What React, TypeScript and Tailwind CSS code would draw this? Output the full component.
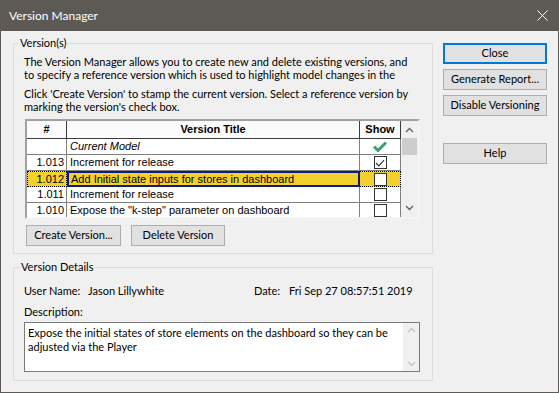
import React from 'react'

const ui = "font-['Lato','Noto_Sans',sans-serif] text-[11px] text-black"
const cell = "font-['Liberation_Sans',Arial,sans-serif] text-[11px] text-black"

const rows = [
  { num: '', title: 'Current Model', italic: true, show: 'current' as const },
  { num: '1.013', title: 'Increment for release', show: true },
  { num: '1.012', title: 'Add Initial state inputs for stores in dashboard', show: false, selected: true },
  { num: '1.011', title: 'Increment for release', show: false },
  { num: '1.010', title: 'Expose the "k-step" parameter on dashboard', show: false },
]

const Chevron = ({ up, color }: { up?: boolean; color: string }) => (
  <svg width="9" height="6" viewBox="0 0 9 6">
    <polyline
      points={up ? '1,5 4.5,1.5 8,5' : '1,1 4.5,4.5 8,1'}
      fill="none"
      stroke={color}
      strokeWidth="1.3"
    />
  </svg>
)

const GreenCheck = () => (
  <svg width="14" height="11" viewBox="0 0 14 11">
    <path d="M1 5.5 L5 9.5 L13 1.5" fill="none" stroke="#3a9f70" strokeWidth="3" />
  </svg>
)

const Box = ({ checked }: { checked?: boolean }) => (
  <div className="w-[13px] h-[13px] border border-[#333333] bg-white flex items-center justify-center">
    {checked && (
      <svg width="10" height="8" viewBox="0 0 10 8">
        <path d="M1 4 L3.8 6.8 L9 1.2" fill="none" stroke="#333333" strokeWidth="1.2" />
      </svg>
    )}
  </div>
)

const Btn = ({ children, w, focused }: { children: React.ReactNode; w: string; focused?: boolean }) => (
  <div
    className={`${w} h-[21px] bg-[#e1e1e1] flex items-center justify-center whitespace-nowrap ${
      focused ? 'border-2 border-[#0078d7]' : 'border border-[#adadad]'
    }`}
  >
    {children}
  </div>
)

const VersionTable = () => (
  <div className="ml-[1px] mt-[6px] w-[395px] h-[100px] border-2 border-t-[#a0a0a0] border-l-[#a0a0a0] border-r-[#f4f4f4] border-b-[#f4f4f4] flex bg-white overflow-hidden">
    <div className="w-[374px] flex flex-col">
      <div className="flex h-[18px] shrink-0 bg-[#fbfbfb]">
        <div className={`${cell} font-bold w-[40px] border-r border-b border-[#3c3c3c] flex items-center justify-center`}>#</div>
        <div className={`${cell} font-bold w-[293px] border-r border-b border-[#3c3c3c] flex items-center justify-center`}>Version Title</div>
        <div className={`${cell} font-bold w-[41px] border-r border-b border-[#3c3c3c] flex items-center justify-center`}>Show</div>
      </div>
      {rows.map((r) => (
        <div key={r.num + r.title} className={`flex h-[16px] shrink-0 ${r.selected ? 'bg-[#f2d02d]' : ''}`}>
          <div
            className={`${cell} w-[40px] flex items-center justify-end pr-[2px] leading-[15px] ${
              r.selected ? 'border border-dotted border-black' : 'border-r border-b border-[#808080]'
            }`}
          >
            {r.num}
          </div>
          <div
            className={`${cell} w-[293px] flex items-center leading-[15px] whitespace-nowrap overflow-hidden ${
              r.selected ? 'border-2 border-[#0f1a86] pl-[2px]' : 'border-r border-b border-[#808080] pl-[3px]'
            } ${r.italic ? 'italic' : ''}`}
          >
            {r.title}
          </div>
          <div
            className={`w-[41px] flex items-center justify-center ${
              r.selected ? 'border-y border-dotted border-black border-r' : 'border-r border-b border-[#808080]'
            }`}
          >
            {r.show === 'current' ? <GreenCheck /> : <Box checked={r.show === true} />}
          </div>
        </div>
      ))}
    </div>
    <div className="w-[17px] bg-[#f0f0f0] flex flex-col items-center">
      <div className="h-[17px] flex items-center justify-center shrink-0">
        <Chevron up color="#606060" />
      </div>
      <div className="w-[15px] h-[17px] bg-[#cdcdcd] shrink-0" />
      <div className="flex-1" />
      <div className="h-[18px] flex items-center justify-center shrink-0">
        <Chevron color="#606060" />
      </div>
    </div>
  </div>
)

export default function App() {
  return (
    <div className={`${ui} w-[559px] h-[393px] bg-[#5d5955] px-[1px] pb-[1px] flex flex-col`}>
      <div className="h-[31px] shrink-0 flex items-center justify-between pl-[8px] pr-[10px]">
        <span className="text-white text-[12px]">Version Manager</span>
        <svg width="11" height="11" viewBox="0 0 11 11">
          <path d="M0.5 0.5 L10.5 10.5 M10.5 0.5 L0.5 10.5" stroke="white" strokeWidth="1" />
        </svg>
      </div>
      <div className="flex-1 bg-[#f0f0f0] flex">
        <div className="w-[432px] pl-[12px] flex flex-col">
          <fieldset className="mt-[5px] w-[420px] border border-[#dcdcdc] px-[10px] pb-[7px]">
            <legend className="ml-[-5px] px-[1px] leading-[14px]">Version(s)</legend>
            <div className="mt-[5px] leading-[13px] whitespace-nowrap">
              <div>The Version Manager allows you to create new and delete existing versions, and</div>
              <div>to specify a reference version which is used to highlight model changes in the</div>
            </div>
            <div className="mt-[6px] leading-[13px] whitespace-nowrap">
              <div>Click 'Create Version' to stamp the current version. Select a reference version by</div>
              <div>marking the version's check box.</div>
            </div>
            <VersionTable />
            <div className="mt-[6px] ml-[2px] flex gap-[10px]">
              <Btn w="w-[95px]">Create Version...</Btn>
              <Btn w="w-[94px]">Delete Version</Btn>
            </div>
          </fieldset>
          <fieldset className="mt-[6px] w-[420px] border border-[#dcdcdc] px-[10px] pb-[8px]">
            <legend className="ml-[-4px] px-[1px] leading-[14px]">Version Details</legend>
            <div className="mt-[10px] flex leading-[13px] whitespace-nowrap">
              <span className="w-[64px]">User Name:</span>
              <span className="w-[166px]">Jason Lillywhite</span>
              <span className="w-[35px]">Date:</span>
              <span>Fri Sep 27 08:57:51 2019</span>
            </div>
            <div className="mt-[8px] leading-[13px]">Description:</div>
            <div className="mt-[4px] w-[396px] h-[50px] border border-[#7a7a7a] bg-white flex">
              <div className="flex-1 pl-[3px] pt-[3px] leading-[14px] whitespace-nowrap overflow-hidden">
                <div>Expose the initial states of store elements on the dashboard so they can be</div>
                <div>adjusted via the Player</div>
              </div>
              <div className="w-[16px] shrink-0 bg-[#f0f0f0] flex flex-col items-center justify-between py-[4px]">
                <Chevron up color="#c4c4c4" />
                <Chevron color="#c4c4c4" />
              </div>
            </div>
          </fieldset>
        </div>
        <div className="pl-[10px] pt-[12px] flex flex-col">
          <Btn w="w-[104px]" focused>Close</Btn>
          <div className="mt-[5px]">
            <Btn w="w-[104px]">Generate Report...</Btn>
          </div>
          <div className="mt-[5px]">
            <Btn w="w-[104px]">Disable Versioning</Btn>
          </div>
          <div className="mt-[27px]">
            <Btn w="w-[104px]">Help</Btn>
          </div>
        </div>
      </div>
    </div>
  )
}
